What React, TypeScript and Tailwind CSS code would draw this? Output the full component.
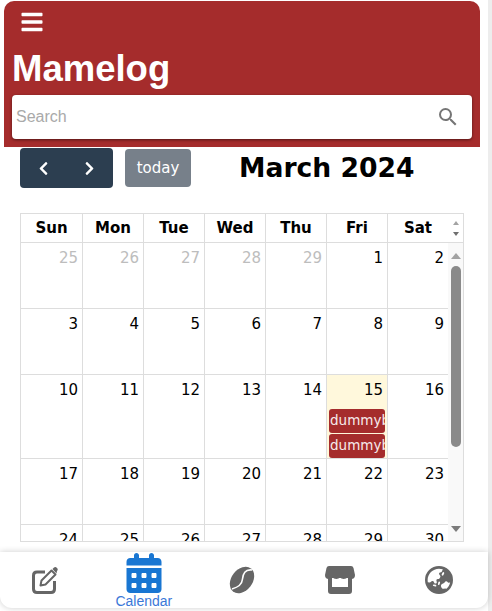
import { FaBars, FaChevronLeft, FaChevronRight } from 'react-icons/fa';
import { FaCalendarDays, FaEarthAsia } from 'react-icons/fa6';
import { MdSearch } from 'react-icons/md';

const days = ['Sun', 'Mon', 'Tue', 'Wed', 'Thu', 'Fri', 'Sat'];

const weeks = [
  { h: 'h-[66px]', cells: [25, 26, 27, 28, 29, 1, 2] },
  { h: 'h-[66px]', cells: [3, 4, 5, 6, 7, 8, 9] },
  { h: 'h-[84px]', cells: [10, 11, 12, 13, 14, 15, 16] },
  { h: 'h-[66px]', cells: [17, 18, 19, 20, 21, 22, 23] },
  { h: 'h-[66px]', cells: [24, 25, 26, 27, 28, 29, 30] },
];

function EditIcon() {
  return (
    <svg width="26" height="28" viewBox="0 0 26 28" fill="none">
      <path d="M13 6H5Q1.5 6 1.5 9.5V23Q1.5 26.5 5 26.5H19Q22.5 26.5 22.5 23V15" stroke="#666666" strokeWidth="3" />
      <path d="M8.5 19.5L9.5 14.5L19.5 4.5L23.5 8.5L13.5 18.5Z" stroke="#666666" strokeWidth="2" strokeLinejoin="round" />
      <path d="M20.5 3L22 1.5Q23.5 .5 25 2Q26.5 3.5 25 5L24.5 7.5Z" fill="#666666" />
    </svg>
  );
}

function BeanIcon() {
  return (
    <svg width="28" height="28" viewBox="0 0 28 28" fill="none">
      <ellipse cx="14" cy="14" rx="14.5" ry="10.5" transform="rotate(-52 14 14)" fill="#666666" />
      <path d="M24 4C17 3 15 8 14.5 13C14 19 10 21 4 23" stroke="white" strokeWidth="1.6" />
    </svg>
  );
}

function StoreIcon() {
  return (
    <svg width="30" height="28" viewBox="0 0 30 28">
      <path fillRule="evenodd" d="M3 10H27V25Q27 28 24 28H6Q3 28 3 25ZM7 12V21H23V12Z" fill="#666666" />
      <path d="M4 0H26Q28 0 28.5 2L30 9Q30 13 26.3 13Q23 13 22.5 11Q21.5 13 18.7 13Q16 13 15 11Q14 13 11.3 13Q8.5 13 7.5 11Q7 13 3.7 13Q0 13 0 9L1.5 2Q2 0 4 0Z" fill="#666666" />
    </svg>
  );
}

function DayCell({ n, muted, today }: { n: number; muted: boolean; today: boolean }) {
  return (
    <div
      className={`border-r border-b border-[#dddddd] last:border-r-0 overflow-hidden ${today ? 'bg-[#fff8dc]' : ''}`}
    >
      <div className={`text-right pr-[4px] pt-[3px] text-[15px] leading-[24px] ${muted ? 'text-[#bdbdbd]' : 'text-black'}`}>
        {n}
      </div>
      {today && (
        <div className="flex flex-col gap-px mt-[7px] px-[2px]">
          <div className="h-[24px] bg-[#a52c2c] rounded-[3px] text-[#f5eaea] text-[13.5px] leading-[23px] pl-[1px] overflow-hidden whitespace-nowrap">
            dummyblend
          </div>
          <div className="h-[24px] bg-[#a52c2c] rounded-[3px] text-[#f5eaea] text-[13.5px] leading-[23px] pl-[1px] overflow-hidden whitespace-nowrap">
            dummyblend
          </div>
        </div>
      )}
    </div>
  );
}

function Calendar() {
  return (
    <div className="ml-[20px] mt-[25px] w-[444px] h-[329px] border border-[#dddddd] overflow-hidden flex flex-col font-['DejaVu_Sans',sans-serif]">
      <div className="flex h-[29px] shrink-0 border-b border-[#dddddd]">
        <div className="w-[427px] shrink-0 grid grid-cols-[62px_61px_61px_61px_61px_61px_60px]">
          {days.map((d) => (
            <div key={d} className="border-r border-[#dddddd] text-center font-bold text-[15px] leading-[28px] text-black last:border-r-0">
              {d}
            </div>
          ))}
        </div>
        <div className="flex-1 flex flex-col items-center justify-center gap-[7px] bg-white">
          <div className="w-0 h-0 border-x-[3.5px] border-x-transparent border-b-[4px] border-b-[#a3a3a3]" />
          <div className="w-0 h-0 border-x-[3.5px] border-x-transparent border-t-[4px] border-t-[#6f6f6f]" />
        </div>
      </div>
      <div className="relative flex-1 overflow-hidden">
        {weeks.map((w, wi) => (
          <div key={wi} className={`w-[427px] grid grid-cols-[62px_61px_61px_61px_61px_61px_60px] ${w.h}`}>
            {w.cells.map((n, i) => (
              <DayCell key={i} n={n} muted={wi === 0 && n > 20} today={wi === 2 && n === 15} />
            ))}
          </div>
        ))}
        {/* scrollbar */}
        <div className="absolute top-0 right-0 bottom-0 w-[15px] bg-[#f9f9f9] flex flex-col items-center">
          <div className="w-0 h-0 mt-[10px] border-x-[5px] border-x-transparent border-b-[6px] border-b-[#a3a3a3]" />
          <div className="w-[10px] h-[181px] mt-[7px] rounded-[5px] bg-[#8a8a8a]" />
          <div className="w-0 h-0 mt-auto mb-[9px] border-x-[5px] border-x-transparent border-t-[6px] border-t-[#7c7c7c]" />
        </div>
      </div>
    </div>
  );
}

function BottomNav() {
  return (
    <div className="absolute left-0 bottom-[3px] w-[488px] h-[56px] bg-white rounded-b-[12px] shadow-[0_0_6px_rgba(0,0,0,0.2)] grid grid-cols-5 items-center text-[#666666]">
      <div className="flex justify-center pr-[8px]">
        <EditIcon />
      </div>
      <div className="flex flex-col items-center text-[#1976d2] pr-[5px]">
        <FaCalendarDays className="text-[40px]" />
        <span className="text-[14px] leading-[14px] text-[#3b78d8] mt-[1px]">Calendar</span>
      </div>
      <div className="flex justify-center pr-[4px]">
        <BeanIcon />
      </div>
      <div className="flex justify-center pr-[3px]">
        <StoreIcon />
      </div>
      <div className="flex justify-center">
        <FaEarthAsia className="text-[28px]" />
      </div>
    </div>
  );
}

export default function App() {
  return (
    <div className="relative w-[492px] h-[611px] overflow-hidden bg-white font-['Liberation_Sans',Arial,sans-serif]">
      <div className="absolute top-0 right-0 bottom-0 w-[4px] bg-[#ededed]" />
      <header className="ml-[4px] w-[476px] h-[146px] relative top-px bg-[#a52c2c] rounded-t-[10px] px-[8px] flex flex-col">
        <FaBars className="text-white text-[24px] ml-[8px] mt-[9px]" />
        <h1 className="mt-[14px] text-white font-bold text-[36.5px] leading-[41px]">Mamelog</h1>
        <div className="mt-[6px] h-[44px] bg-white rounded-[4px] shadow-[0_1px_3px_rgba(0,0,0,0.5)] flex items-center pl-[4px] pr-[12px]">
          <span className="flex-1 text-[16px] text-[#a9a9a9]">Search</span>
          <MdSearch className="text-[24px] text-[#757575]" />
        </div>
      </header>
      <div className="flex items-center pl-[20px] h-[40px] mt-[2px] font-['DejaVu_Sans',sans-serif]">
        <div className="w-[93px] h-[40px] rounded-[4px] bg-[#2c3e50] flex items-center justify-between px-[16px] text-white">
          <FaChevronLeft className="text-[15px]" />
          <FaChevronRight className="text-[15px]" />
        </div>
        <div className="ml-[12px] w-[66px] h-[38px] rounded-[4px] bg-[#77808a] text-white text-[15px] flex items-center justify-center">
          today
        </div>
        <h2 className="ml-[48px] font-bold text-[26.6px] text-black whitespace-nowrap">March 2024</h2>
      </div>
      <Calendar />
      <BottomNav />
    </div>
  );
}
